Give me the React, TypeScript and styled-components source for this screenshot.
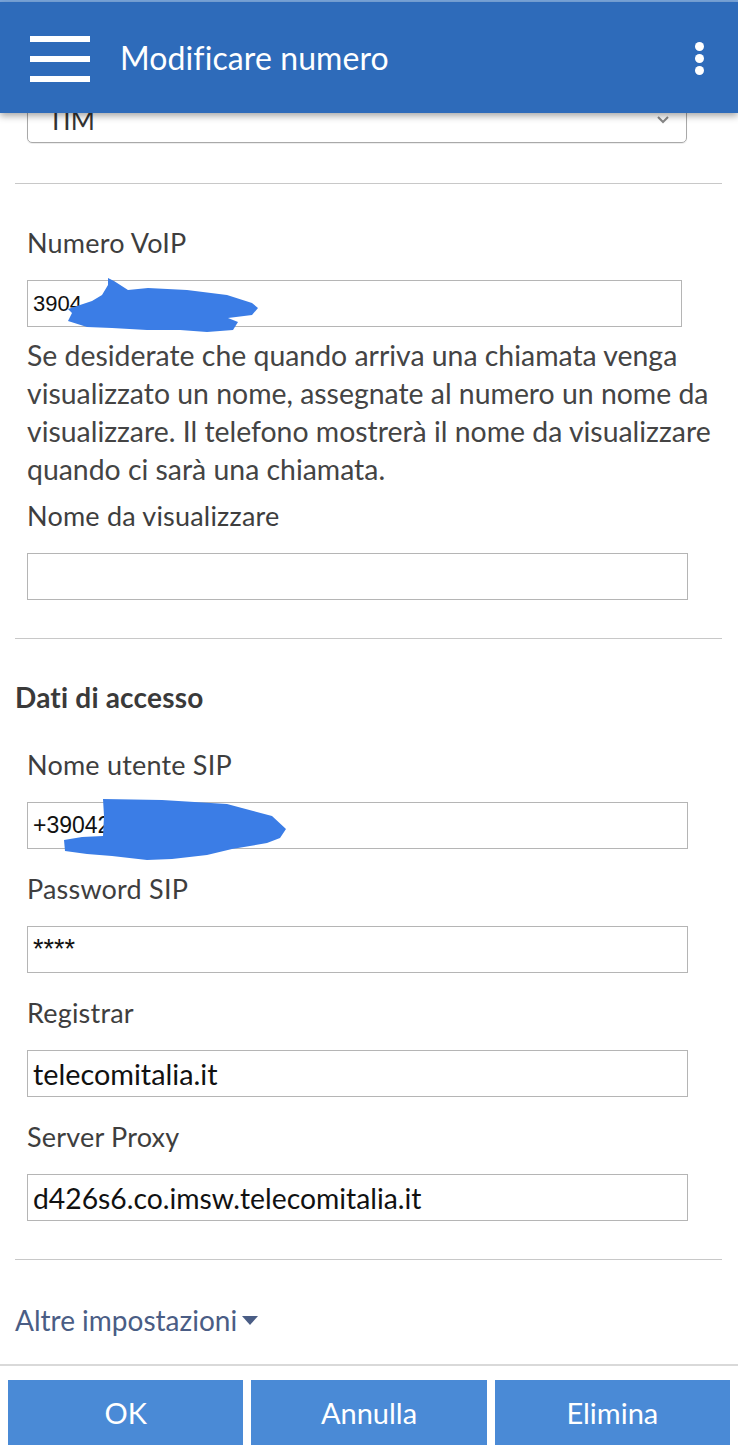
import React from "react";
import styled, { createGlobalStyle } from "styled-components";

const Global = createGlobalStyle`
  html, body { margin: 0; padding: 0; background: #fff; overflow: hidden; }
  body { font-family: Lato, "Open Sans", sans-serif; color: #3c3c3c; }
  * { box-sizing: border-box; }
`;

const Page = styled.div`
  width: 738px;
  display: flex;
  flex-direction: column;
  background: #fff;
  & > * { flex-shrink: 0; }
`;

const TopStrip = styled.div`
  height: 2px;
  background: #7aa6dc;
`;

const Header = styled.header`
  position: relative;
  z-index: 2;
  height: 111px;
  background: #2e6bba;
  box-shadow: 0 3px 7px rgba(0, 0, 0, 0.35);
  display: flex;
  align-items: center;
  padding: 0 0 0 30px;
`;

const Burger = styled.div`
  width: 60px;
  height: 46px;
  display: flex;
  flex-direction: column;
  justify-content: space-between;
  margin-right: 30px;
  margin-top: 2px;
  span {
    display: block;
    height: 6px;
    background: #fff;
  }
`;

const Title = styled.h1`
  margin: 0;
  flex: 1;
  font-size: 32px;
  font-weight: 400;
  color: #fff;
  letter-spacing: 0.1px;
`;

const Kebab = styled.div`
  width: 10px;
  margin-right: 33px;
  margin-top: 2px;
  display: flex;
  flex-direction: column;
  gap: 3px;
  span {
    width: 9px;
    height: 9px;
    border-radius: 50%;
    background: #fff;
  }
`;

const Body = styled.main`
  position: relative;
  display: flex;
  flex-direction: column;
  padding: 0 16px 0 15px;
`;

const SelectPeek = styled.div`
  height: 31px;
  overflow: hidden;
  padding: 0 35px 0 12px;
`;

const SelectBox = styled.div`
  margin-top: -17px;
  height: 47px;
  border: 1px solid #a9a9a9;
  border-radius: 5px;
  display: flex;
  align-items: center;
  justify-content: space-between;
  padding: 0 16px 0 20px;
  font-size: 26px;
  color: #333;
  box-shadow: 0 1px 1px rgba(0, 0, 0, 0.08);
`;

const Divider = styled.hr<{ $top: number; $bottom: number }>`
  border: none;
  height: 1px;
  background: #c8c8c8;
  margin: ${(p) => p.$top}px 0 ${(p) => p.$bottom}px;
`;

const Field = styled.div<{ $gap?: number }>`
  position: relative;
  display: flex;
  flex-direction: column;
  padding-left: 12px;
  margin-bottom: ${(p) => p.$gap ?? 23}px;
`;

const Label = styled.label`
  font-size: 27px;
  line-height: 34px;
  color: #3e3e3e;
  margin-bottom: 20px;
  letter-spacing: 0.2px;
`;

const InputWrap = styled.div`
  position: relative;
`;

const Input = styled.div<{ $w?: number; $mono?: boolean; $size?: number }>`
  width: ${(p) => p.$w ?? 661}px;
  height: 47px;
  border: 1px solid #b5b5b5;
  background: #fff;
  display: flex;
  align-items: center;
  padding-left: 5px;
  font-family: ${(p) => (p.$mono ? '"Liberation Sans", Arial, sans-serif' : 'Lato, "Open Sans", sans-serif')};
  font-size: ${(p) => p.$size ?? 28}px;
  color: #111;
`;

const Help = styled.p`
  margin: 9px 0 11px;
  font-size: 28.4px;
  line-height: 38px;
  color: #444;
`;

const SectionTitle = styled.h2`
  margin: 0 0 34px;
  font-size: 28px;
  line-height: 34px;
  font-weight: 700;
  color: #3a3a3a;
  letter-spacing: 0.2px;
`;

const MoreLink = styled.a`
  display: flex;
  align-items: center;
  gap: 4px;
  font-size: 28px;
  line-height: 34px;
  color: #4a5d85;
  margin: -2px 0 27px;
`;

const FullRule = styled.div`
  height: 2px;
  background: #d9d9d9;
`;

const ButtonBar = styled.div`
  display: grid;
  grid-template-columns: repeat(3, 1fr);
  gap: 8px;
  padding: 14px 8px 0;
`;

const Button = styled.button`
  height: 70px;
  border: none;
  background: #4a8ad6;
  color: #fff;
  font-family: Lato, "Open Sans", sans-serif;
  font-size: 29px;
  padding: 0 0 6px;
`;

const Scribble = styled.svg`
  position: absolute;
  pointer-events: none;
`;

const Blob1 = () => (
  <Scribble width="200" height="60" viewBox="0 0 200 60" style={{ left: 35, top: -5 }}>
    <path
      d="M46 3 L52 6 L66 15 L86 13 L125 15 L165 20 L190 28 L196 33 L190 40 L166 43 L176 47 L171 55 L145 57 L118 55 L85 55 L50 53 L25 52 L6 46 L10 38 L6 34 L30 26 L40 20 L46 10 Z"
      fill="#3b7de6"
    />
  </Scribble>
);

const Blob2 = () => (
  <Scribble width="230" height="66" viewBox="0 0 230 66" style={{ left: 35, top: -6 }}>
    <path
      d="M41 3 L100 4 L165 8 L210 20 L224 33 L218 42 L205 47 L170 53 L145 59 L110 63 L85 64 L50 60 L25 58 L3 55 L2 44 L20 41 L41 40 L42 20 Z"
      fill="#3b7de6"
    />
  </Scribble>
);

const Chevron = () => (
  <svg width="14" height="10" viewBox="0 0 14 10">
    <path d="M2 2 L7 7 L12 2" stroke="#888" strokeWidth="2" fill="none" />
  </svg>
);

const Caret = () => (
  <svg width="18" height="14" viewBox="0 0 18 14">
    <path d="M1 3 H17 L9 12 Z" fill="#4a5d85" />
  </svg>
);

export default function App() {
  return (
    <Page>
      <Global />
      <TopStrip />
      <Header>
        <Burger>
          <span />
          <span />
          <span />
        </Burger>
        <Title>Modificare numero</Title>
        <Kebab>
          <span />
          <span />
          <span />
        </Kebab>
      </Header>
      <Body>
        <SelectPeek>
          <SelectBox>
            <span>TIM</span>
            <Chevron />
          </SelectBox>
        </SelectPeek>
        <Divider $top={39} $bottom={42} />

        <Field $gap={0}>
          <Label>Numero VoIP</Label>
          <InputWrap>
            <Input $w={655} $mono $size={22}>
              3904
            </Input>
            <Blob1 />
          </InputWrap>
        </Field>
        <Field $gap={0}>
          <Help>
            Se desiderate che quando arriva una chiamata venga visualizzato un nome, assegnate al numero un nome da
            visualizzare. Il telefono mostrerà il nome da visualizzare quando ci sarà una chiamata.
          </Help>
        </Field>
        <Field $gap={0}>
          <Label>Nome da visualizzare</Label>
          <Input />
        </Field>
        <Divider $top={38} $bottom={41} />

        <SectionTitle>Dati di accesso</SectionTitle>
        <Field>
          <Label>Nome utente SIP</Label>
          <InputWrap>
            <Input $mono $size={23}>
              +39042
            </Input>
            <Blob2 />
          </InputWrap>
        </Field>
        <Field>
          <Label>Password SIP</Label>
          <Input $mono $size={27}>
            ****
          </Input>
        </Field>
        <Field>
          <Label>Registrar</Label>
          <Input $size={28.8}>telecomitalia.it</Input>
        </Field>
        <Field $gap={0}>
          <Label>Server Proxy</Label>
          <Input $size={28.3}>d426s6.co.imsw.telecomitalia.it</Input>
        </Field>
        <Divider $top={38} $bottom={45} />

        <MoreLink>
          Altre impostazioni
          <Caret />
        </MoreLink>
      </Body>
      <FullRule />
      <ButtonBar>
        <Button>OK</Button>
        <Button>Annulla</Button>
        <Button>Elimina</Button>
      </ButtonBar>
    </Page>
  );
}
